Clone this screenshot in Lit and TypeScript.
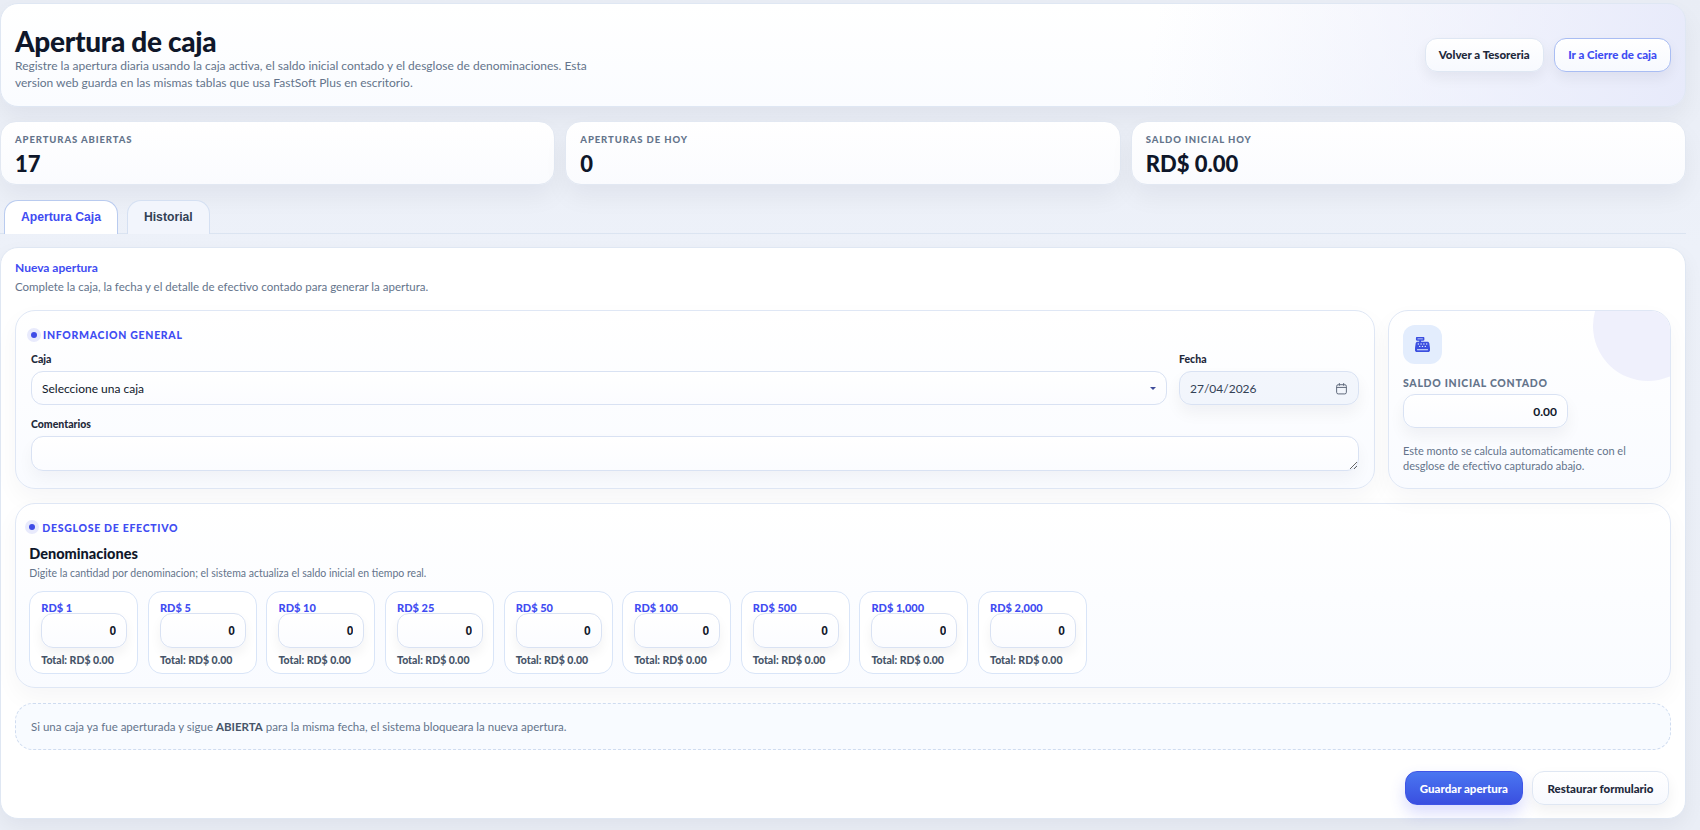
import { LitElement, html, css } from 'lit';
import { customElement } from 'lit/decorators.js';

const denominations = ['1', '5', '10', '25', '50', '100', '500', '1,000', '2,000'];

const registerPath =
  'M64 0C46.3 0 32 14.3 32 32V96c0 17.7 14.3 32 32 32h80v32H87c-31.6 0-58.5 23.1-63.3 54.4L1.1 364.1C.4 368.8 0 373.6 0 378.4V448c0 35.3 28.7 64 64 64H448c35.3 0 64-28.7 64-64V378.4c0-4.8-.4-9.6-1.1-14.4L488.2 214.4C483.5 183.1 456.6 160 425 160H208V128h80c17.7 0 32-14.3 32-32V32c0-17.7-14.3-32-32-32H64zM96 48H256c8.8 0 16 7.2 16 16s-7.2 16-16 16H96c-8.8 0-16-7.2-16-16s7.2-16 16-16zM64 432c0-8.8 7.2-16 16-16H432c8.8 0 16 7.2 16 16s-7.2 16-16 16H80c-8.8 0-16-7.2-16-16zm48-168a24 24 0 1 1 0-48 24 24 0 1 1 0 48zm120-24a24 24 0 1 1 -48 0 24 24 0 1 1 48 0zM160 344a24 24 0 1 1 0-48 24 24 0 1 1 0 48zM328 240a24 24 0 1 1 -48 0 24 24 0 1 1 48 0zM256 344a24 24 0 1 1 0-48 24 24 0 1 1 0 48zM424 240a24 24 0 1 1 -48 0 24 24 0 1 1 48 0zM352 344a24 24 0 1 1 0-48 24 24 0 1 1 0 48z';

@customElement('app-root')
export class AppRoot extends LitElement {
  static styles = css`
    :host {
      display: block;
      height: 830px;
      overflow: hidden;
      background: linear-gradient(180deg, #e9edf5 0%, #edf1f9 30%, #eaeef6 100%);
      font-family: Lato, 'Open Sans', sans-serif;
      color: #0f172a;
    }
    * {
      box-sizing: border-box;
    }
    .page {
      width: 1686px;
      padding-top: 3px;
      display: flex;
      flex-direction: column;
    }
    .hero {
      height: 103.5px;
      margin-bottom: 14px;
      padding: 0 14px;
      display: flex;
      align-items: center;
      justify-content: space-between;
      border: 1px solid #dfe7f3;
      border-radius: 18px;
      background:
        linear-gradient(100deg, rgba(255, 255, 255, 0) 68%, rgba(230, 233, 250, 0.95) 100%),
        linear-gradient(180deg, #ffffff, #fafcff);
      box-shadow: 0 12px 24px rgba(15, 23, 42, 0.05);
    }
    .hero h1 {
      margin: 0;
      font-size: 28px;
      line-height: 32px;
      font-weight: 900;
      letter-spacing: -0.3px;
      color: #0f172a;
    }
    .hero p {
      margin: 0;
      max-width: 590px;
      font-size: 12px;
      line-height: 17px;
      color: #64748b;
    }
    .hero-copy {
      padding-top: 6px;
    }
    .hero-actions {
      display: flex;
      gap: 10.5px;
    }
    .btn {
      height: 34px;
      padding: 0 13px;
      display: inline-flex;
      align-items: center;
      justify-content: center;
      border-radius: 12px;
      border: 1px solid #dfe7f3;
      background: linear-gradient(180deg, #ffffff, #f7f9fe);
      font: 900 11.5px Lato, sans-serif;
      color: #1e293b;
      box-shadow: 0 6px 14px rgba(15, 23, 42, 0.06);
    }
    .btn.link {
      border-color: #a9bdf3;
      color: #3f4cf2;
    }
    .btn.primary {
      border: 1px solid #3f55e6;
      background: linear-gradient(180deg, #4a76f1, #3a4fe0);
      color: #ffffff;
      box-shadow: 0 8px 16px rgba(63, 76, 242, 0.2);
    }
    .stats {
      display: grid;
      grid-template-columns: repeat(3, 1fr);
      gap: 10px;
      margin-bottom: 15px;
    }
    .stat {
      height: 64.5px;
      padding: 12px 14px 0;
      border: 1px solid #e2e8f2;
      border-radius: 16px;
      background: linear-gradient(180deg, #ffffff, #fafbfe);
      box-shadow: 0 12px 24px rgba(15, 23, 42, 0.05);
    }
    .stat-label {
      font-size: 9.5px;
      line-height: 12px;
      font-weight: 900;
      letter-spacing: 0.9px;
      text-transform: uppercase;
      color: #64748b;
    }
    .stat-value {
      margin-top: 5px;
      font-size: 22px;
      line-height: 26px;
      font-weight: 900;
      color: #0f172a;
    }
    .tabs {
      display: flex;
      gap: 9px;
      height: 33.5px;
      padding-left: 4px;
      border-bottom: 1px solid #dbe4f1;
      margin-bottom: 13.5px;
    }
    .tab {
      height: 33.5px;
      padding: 0 16px;
      display: flex;
      align-items: center;
      border: 1px solid #d5e0f2;
      border-bottom: none;
      border-radius: 14px 14px 0 0;
      background: #f2f5fc;
      font: 700 12.2px 'Liberation Sans', Arial, sans-serif;
      color: #334155;
    }
    .tab.active {
      background: #ffffff;
      border-color: #b9cbef;
      color: #3f4cf2;
    }
    .panel {
      height: 572px;
      padding: 10.5px 14px 0;
      border: 1px solid #dfe7f3;
      border-radius: 18px;
      background: #ffffff;
      box-shadow: 0 8px 20px rgba(15, 23, 42, 0.05);
      display: flex;
      flex-direction: column;
    }
    .eyebrow {
      font-size: 12px;
      line-height: 17px;
      font-weight: 700;
      color: #3f4cf2;
    }
    .panel-sub {
      margin-top: 3.5px;
      font-size: 11.5px;
      line-height: 16px;
      color: #64748b;
    }
    .top-row {
      margin-top: 14.5px;
      display: grid;
      grid-template-columns: 1fr 283px;
      gap: 13px;
      height: 179px;
    }
    .section {
      border: 1px solid #dfe7f5;
      border-radius: 20px;
      background: linear-gradient(180deg, #ffffff, #f9fbff);
      box-shadow: 0 10px 24px rgba(15, 23, 42, 0.04);
    }
    .info {
      padding: 16.5px 15px 0;
    }
    .section-title {
      display: flex;
      align-items: center;
      gap: 2px;
      margin-left: -4px;
      font-size: 10.5px;
      line-height: 16px;
      font-weight: 900;
      letter-spacing: 0.7px;
      color: #3f4cf2;
    }
    .dot {
      width: 14px;
      height: 14px;
      border-radius: 50%;
      background: #e8eafc;
      display: flex;
      align-items: center;
      justify-content: center;
      flex: none;
    }
    .dot::after {
      content: '';
      width: 6px;
      height: 6px;
      border-radius: 50%;
      background: #3f4ce6;
    }
    .form-grid {
      margin-top: 9px;
      display: grid;
      grid-template-columns: 1fr 180px;
      column-gap: 12px;
      row-gap: 12px;
    }
    .field label {
      display: block;
      margin-bottom: 5px;
      font-size: 10.5px;
      line-height: 14px;
      font-weight: 900;
      color: #1e293b;
    }
    .field.wide {
      grid-column: 1 / -1;
    }
    .control {
      position: relative;
      width: 100%;
      height: 34px;
      display: block;
      padding: 0 10px;
      border: 1px solid #d9e2f3;
      border-radius: 12px;
      background: linear-gradient(180deg, #ffffff, #fbfcff);
      font: 400 12px Lato, sans-serif;
      color: #0f172a;
      outline: none;
    }
    select.control {
      appearance: none;
    }
    .select-wrap {
      position: relative;
    }
    .caret {
      position: absolute;
      right: 11.5px;
      top: 15.5px;
      width: 0;
      height: 0;
      border-left: 3px solid transparent;
      border-right: 3px solid transparent;
      border-top: 3px solid #3f4c9a;
    }
    .date {
      display: flex;
      align-items: center;
      justify-content: space-between;
      background: linear-gradient(180deg, #f3f6fc, #f1f5fc);
      color: #334155;
      box-shadow: 0 8px 16px rgba(15, 23, 42, 0.05);
    }
    textarea.control {
      height: 35px;
      resize: vertical;
      box-shadow: 0 8px 16px rgba(15, 23, 42, 0.04);
    }
    .saldo {
      position: relative;
      overflow: hidden;
      padding: 14.5px 14px 0;
    }
    .saldo::before {
      content: '';
      position: absolute;
      width: 110px;
      height: 110px;
      top: -40px;
      right: -33px;
      border-radius: 50%;
      background: #eff0fc;
    }
    .saldo > * {
      position: relative;
    }
    .icon-box {
      width: 39px;
      height: 39px;
      border-radius: 12px;
      background: #e3edfd;
      display: flex;
      align-items: center;
      justify-content: center;
    }
    .icon-box svg {
      width: 15px;
      height: 15px;
      fill: #3b4fe0;
    }
    .saldo-label {
      margin-top: 12px;
      font-size: 10.5px;
      line-height: 14px;
      font-weight: 900;
      letter-spacing: 0.7px;
      color: #64748b;
    }
    .saldo input {
      margin-top: 4px;
      width: 165px;
      text-align: right;
      font-weight: 700;
      box-shadow: 0 8px 16px rgba(15, 23, 42, 0.05);
    }
    .saldo p {
      margin: 15px 0 0;
      font-size: 11px;
      line-height: 15.3px;
      color: #64748b;
    }
    .cash {
      margin-top: 14.5px;
      height: 185px;
      padding: 16px 13.3px 0;
    }
    .cash .section-title {
      gap: 3px;
    }
    .cash .dot {
      margin-top: -2px;
    }
    .cash h3 {
      margin: 8px 0 0;
      font-size: 14.5px;
      line-height: 20px;
      font-weight: 900;
      color: #0f172a;
    }
    .cash-sub {
      font-size: 10.5px;
      line-height: 18px;
      color: #64748b;
    }
    .denoms {
      margin-top: 8.7px;
      display: flex;
      gap: 9.6px;
    }
    .denom {
      width: 109px;
      height: 83.5px;
      padding: 9.5px 11px 0;
      border: 1px solid #d9e5f8;
      border-radius: 14px;
      background: #ffffff;
    }
    .denom-label {
      font-size: 11px;
      line-height: 13px;
      font-weight: 900;
      color: #3f4cf2;
    }
    .denom input {
      width: 86px;
      height: 35px;
      margin-top: -1px;
      text-align: right;
      font-family: 'Liberation Sans', Arial, sans-serif;
      font-size: 12px;
      font-weight: 700;
      box-shadow: 0 6px 12px rgba(15, 23, 42, 0.05);
    }
    .denom-total {
      margin-top: 5px;
      font-size: 10.5px;
      line-height: 14px;
      font-weight: 900;
      color: #475569;
    }
    .notice {
      margin-top: 15px;
      height: 47px;
      padding: 0 15px;
      display: flex;
      align-items: center;
      gap: 3px;
      border: 1px dashed #cfdcf0;
      border-radius: 18px;
      background: #f8fbff;
      font-size: 11.5px;
      color: #64748b;
      white-space: pre;
    }
    .notice strong {
      color: #475569;
    }
    .actions {
      margin-top: 21px;
      display: flex;
      justify-content: flex-end;
      gap: 9.5px;
      padding-right: 2.5px;
    }
    .actions .btn {
      padding: 0 14px;
    }
  `;

  render() {
    return html`
      <div class="page">
        <header class="hero">
          <div class="hero-copy">
            <h1>Apertura de caja</h1>
            <p>
              Registre la apertura diaria usando la caja activa, el saldo inicial contado y el
              desglose de denominaciones. Esta version web guarda en las mismas tablas que usa
              FastSoft Plus en escritorio.
            </p>
          </div>
          <div class="hero-actions">
            <a class="btn">Volver a Tesoreria</a>
            <a class="btn link">Ir a Cierre de caja</a>
          </div>
        </header>

        <section class="stats">
          <div class="stat">
            <div class="stat-label">Aperturas abiertas</div>
            <div class="stat-value">17</div>
          </div>
          <div class="stat">
            <div class="stat-label">Aperturas de hoy</div>
            <div class="stat-value">0</div>
          </div>
          <div class="stat">
            <div class="stat-label">Saldo inicial hoy</div>
            <div class="stat-value">RD$ 0.00</div>
          </div>
        </section>

        <nav class="tabs">
          <div class="tab active">Apertura Caja</div>
          <div class="tab">Historial</div>
        </nav>

        <main class="panel">
          <div class="eyebrow">Nueva apertura</div>
          <div class="panel-sub">
            Complete la caja, la fecha y el detalle de efectivo contado para generar la apertura.
          </div>

          <div class="top-row">
            <section class="section info">
              <div class="section-title"><span class="dot"></span>INFORMACION GENERAL</div>
              <div class="form-grid">
                <div class="field">
                  <label>Caja</label>
                  <div class="select-wrap">
                    <select class="control"><option>Seleccione una caja</option></select>
                    <span class="caret"></span>
                  </div>
                </div>
                <div class="field">
                  <label>Fecha</label>
                  <div class="control date">
                    <span>27/04/2026</span>
                    <svg width="13" height="13" viewBox="0 0 24 24" fill="none" stroke="#5b6678" stroke-width="1.8">
                      <rect x="3" y="5" width="18" height="17" rx="3"></rect>
                      <path d="M3 10h18M8 2v5M16 2v5"></path>
                    </svg>
                  </div>
                </div>
                <div class="field wide">
                  <label>Comentarios</label>
                  <textarea class="control"></textarea>
                </div>
              </div>
            </section>

            <aside class="section saldo">
              <div class="icon-box">
                <svg viewBox="0 0 512 512"><path d="${registerPath}"></path></svg>
              </div>
              <div class="saldo-label">SALDO INICIAL CONTADO</div>
              <input class="control" .value=${'0.00'} readonly />
              <p>
                Este monto se calcula automaticamente con el desglose de efectivo capturado abajo.
              </p>
            </aside>
          </div>

          <section class="section cash">
            <div class="section-title"><span class="dot"></span>DESGLOSE DE EFECTIVO</div>
            <h3>Denominaciones</h3>
            <div class="cash-sub">
              Digite la cantidad por denominacion; el sistema actualiza el saldo inicial en tiempo
              real.
            </div>
            <div class="denoms">
              ${denominations.map(
                (d) => html`
                  <div class="denom">
                    <div class="denom-label">RD$ ${d}</div>
                    <input class="control" .value=${'0'} />
                    <div class="denom-total">Total: RD$ 0.00</div>
                  </div>
                `,
              )}
            </div>
          </section>

          <div class="notice">
            <span>Si una caja ya fue aperturada y sigue</span><strong>ABIERTA</strong><span>para la misma fecha, el sistema bloqueara la nueva apertura.</span>
          </div>

          <div class="actions">
            <button class="btn primary">Guardar apertura</button>
            <button class="btn">Restaurar formulario</button>
          </div>
        </main>
      </div>
    `;
  }
}
